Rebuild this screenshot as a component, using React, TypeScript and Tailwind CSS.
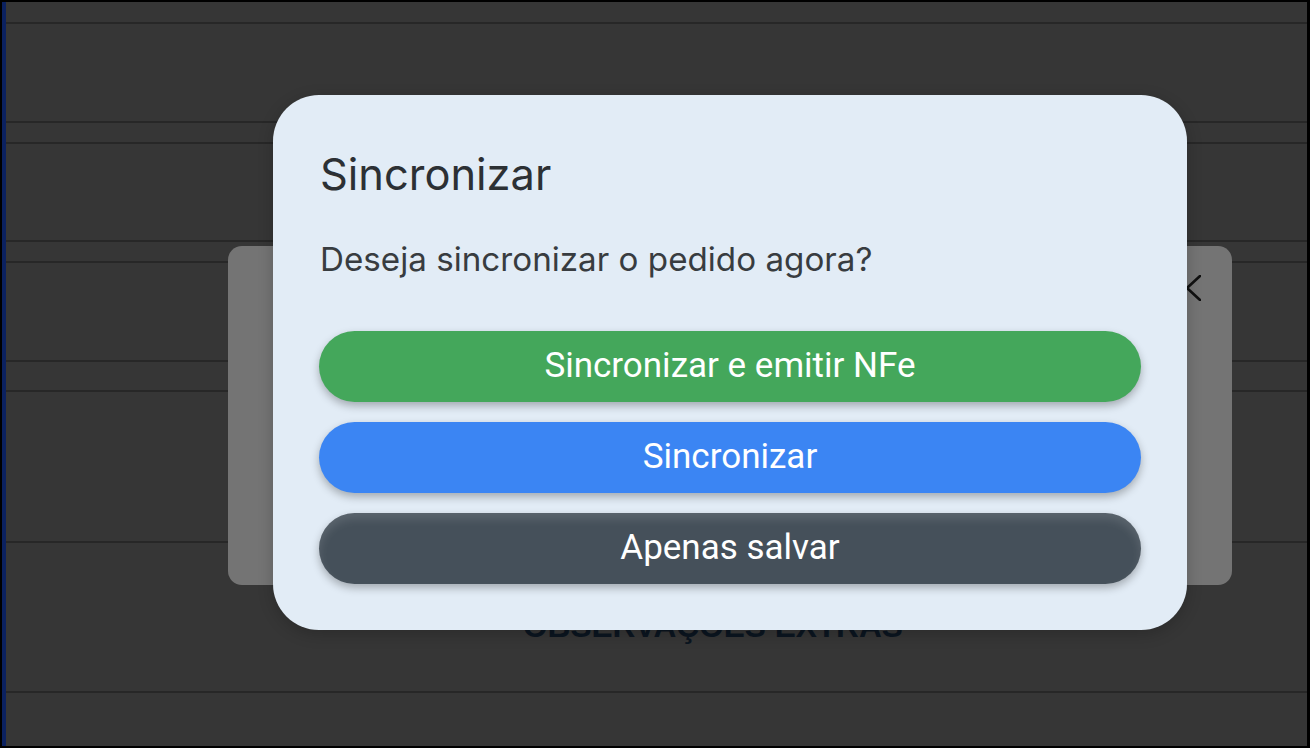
import React from 'react';

const Row = ({ h, children }: { h: string; children?: React.ReactNode }) => (
    <div className={`${h} shrink-0 border-b-2 border-[#272727]`}>{children}</div>
);

const ActionButton = ({ label, className }: { label: string; className: string }) => (
    <button
        className={`h-[71px] w-full rounded-full flex items-center justify-center text-white text-[35px] font-normal shadow-[0_4px_8px_rgba(0,0,0,0.28)] ${className}`}
        style={{ fontFamily: 'Roboto, "Liberation Sans", sans-serif' }}
    >
        {label}
    </button>
);

const App = () => {
    return (
        <div className="w-[1310px] h-[748px] bg-black pt-[2px] pb-[2px] pl-[2px] pr-[3px] overflow-hidden">
            <div className="relative h-full border-l-4 border-[#0b2160] bg-[#363636] flex flex-col">
                {/* Page rows behind the dialogs */}
                <Row h="h-[22px]" />
                <Row h="h-[99px]" />
                <Row h="h-[21px]" />
                <Row h="h-[98px]" />
                <Row h="h-[21px]" />
                <Row h="h-[99px]" />
                <Row h="h-[30px]" />
                <Row h="h-[151px]" />
                <Row h="h-[150px]">
                    <div
                        className="pt-[68px] pl-[517px] text-[31.6px] leading-[31px] font-bold text-[#0b1520] whitespace-nowrap"
                        style={{ fontFamily: '"Liberation Sans", Arial, sans-serif' }}
                    >
                        OBSERVAÇÕES EXTRAS
                    </div>
                </Row>
                <div className="flex-1" />

                {/* Underlying dialog (dimmed) */}
                <div className="absolute left-[222px] top-[244px] w-[1004px] h-[339px] rounded-[14px] bg-[#747474]">
                    <svg className="absolute left-[945px] top-[29px]" width="28" height="26" viewBox="0 0 28 26">
                        <path d="M1 1 L27 25 M27 1 L1 25" stroke="#111" strokeWidth="2.6" fill="none" strokeLinecap="round" />
                    </svg>
                </div>

                {/* Sync dialog */}
                <div className="absolute left-[267px] top-[93px] w-[914px] h-[535px] rounded-[46px] bg-[#e2ecf6] px-[46px] pt-[58px] pb-[46px] flex flex-col shadow-[0_4px_16px_rgba(0,0,0,0.2)]">
                    <h2
                        className="text-[43.4px] leading-[43px] font-normal text-[#2c3034] pl-[1px]"
                        style={{ fontFamily: 'Inter, "Noto Sans", sans-serif' }}
                    >
                        Sincronizar
                    </h2>
                    <p
                        className="mt-[47px] text-[33.2px] leading-[33px] text-[#383c40] pl-[1px]"
                        style={{ fontFamily: 'Inter, "Noto Sans", sans-serif' }}
                    >
                        Deseja sincronizar o pedido agora?
                    </p>
                    <div className="mt-[55px] flex flex-col gap-[20px]">
                        <ActionButton label="Sincronizar e emitir NFe" className="bg-[#44a75b]" />
                        <ActionButton label="Sincronizar" className="bg-[#3b85f3]" />
                        <ActionButton
                            label="Apenas salvar"
                            className="bg-[#45505a] shadow-[inset_0_6px_10px_rgba(255,255,255,0.12),0_4px_8px_rgba(0,0,0,0.28)]"
                        />
                    </div>
                </div>
            </div>
        </div>
    );
};

export default App;
